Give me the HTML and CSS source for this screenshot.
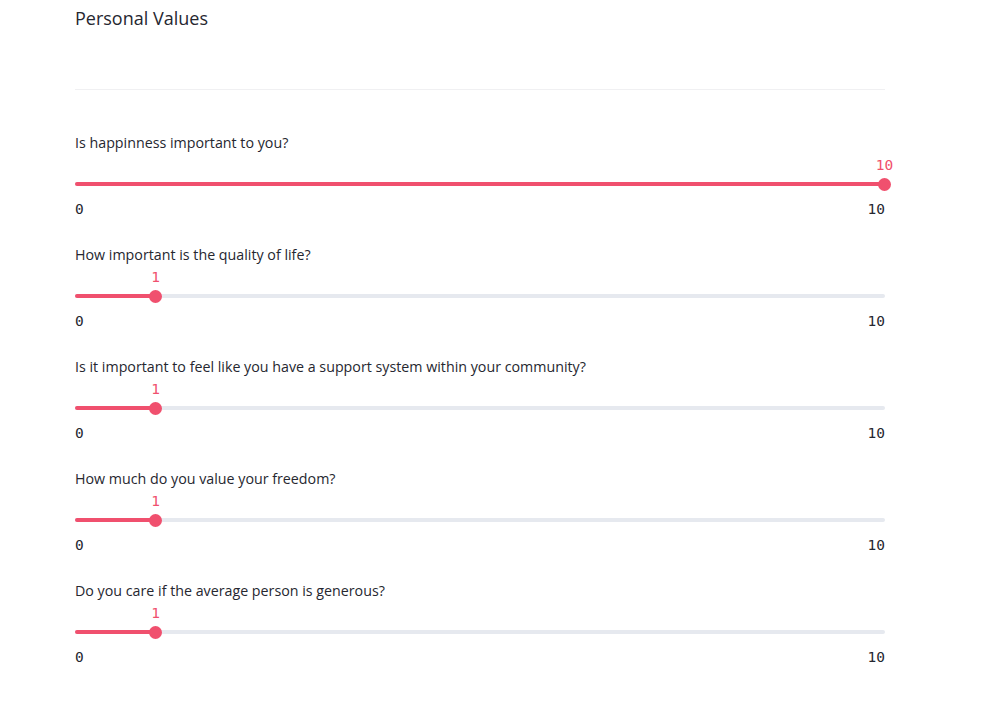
FILE: index.html
```html
<!DOCTYPE html>
<html>
<head>
<meta charset="utf-8">
<link rel="stylesheet" href="styles.css">
</head>
<body>
<main class="main">
  <h2 class="title">Personal Values</h2>
  <div class="rule"></div>
  <div class="sliders">
    <div class="slider">
      <div class="label">Is happinness important to you?</div>
      <div class="control">
        <div class="track"><div class="fill" style="width:100%"></div>
          <div class="thumb" style="left:100%"><span class="value">10</span></div></div>
      </div>
      <div class="ticks"><span>0</span><span>10</span></div>
    </div>
    <div class="slider">
      <div class="label">How important is the quality of life?</div>
      <div class="control">
        <div class="track"><div class="fill" style="width:10%"></div>
          <div class="thumb" style="left:10%"><span class="value">1</span></div></div>
      </div>
      <div class="ticks"><span>0</span><span>10</span></div>
    </div>
    <div class="slider">
      <div class="label">Is it important to feel like you have a support system within your community?</div>
      <div class="control">
        <div class="track"><div class="fill" style="width:10%"></div>
          <div class="thumb" style="left:10%"><span class="value">1</span></div></div>
      </div>
      <div class="ticks"><span>0</span><span>10</span></div>
    </div>
    <div class="slider">
      <div class="label">How much do you value your freedom?</div>
      <div class="control">
        <div class="track"><div class="fill" style="width:10%"></div>
          <div class="thumb" style="left:10%"><span class="value">1</span></div></div>
      </div>
      <div class="ticks"><span>0</span><span>10</span></div>
    </div>
    <div class="slider">
      <div class="label">Do you care if the average person is generous?</div>
      <div class="control">
        <div class="track"><div class="fill" style="width:10%"></div>
          <div class="thumb" style="left:10%"><span class="value">1</span></div></div>
      </div>
      <div class="ticks"><span>0</span><span>10</span></div>
    </div>
  </div>
</main>
</body>
</html>
```
FILE: styles.css
```css
html, body {
  margin: 0;
  padding: 0;
  background: #ffffff;
}
body {
  font-family: "Open Sans", "Noto Sans", sans-serif;
  color: #262730;
}
.main {
  width: 810px;
  margin-left: 75px;
}
.title {
  margin: 0;
  font-size: 18px;
  font-weight: 400;
  line-height: 36px;
  height: 36px;
}
.rule {
  margin-top: 53px;
  height: 1px;
  background: #f0f0f2;
}
.sliders {
  margin-top: 43px;
  display: flex;
  flex-direction: column;
  gap: 27px;
}
.slider {
  display: flex;
  flex-direction: column;
}
.label {
  font-size: 14.25px;
  line-height: 20px;
  height: 20px;
}
.control {
  padding-top: 22px;
  height: 18px;
  display: flex;
  align-items: center;
}
.track {
  position: relative;
  width: 100%;
  height: 4px;
  border-radius: 2px;
  background: #e6e9ef;
}
.fill {
  height: 100%;
  border-radius: 2px;
  background: #f0506e;
}
.thumb {
  position: absolute;
  top: 50%;
  width: 13px;
  height: 13px;
  margin-left: -7px;
  margin-top: -6.5px;
  border-radius: 50%;
  background: #f0506e;
}
.value {
  position: absolute;
  left: 50%;
  bottom: 17px;
  transform: translateX(-50%);
  font-family: "DejaVu Sans Mono", monospace;
  font-size: 14.5px;
  line-height: 18px;
  color: #f0506e;
}
.ticks {
  display: flex;
  justify-content: space-between;
  padding-top: 7px;
  font-family: "DejaVu Sans Mono", monospace;
  font-size: 14.5px;
  line-height: 18px;
}
```
